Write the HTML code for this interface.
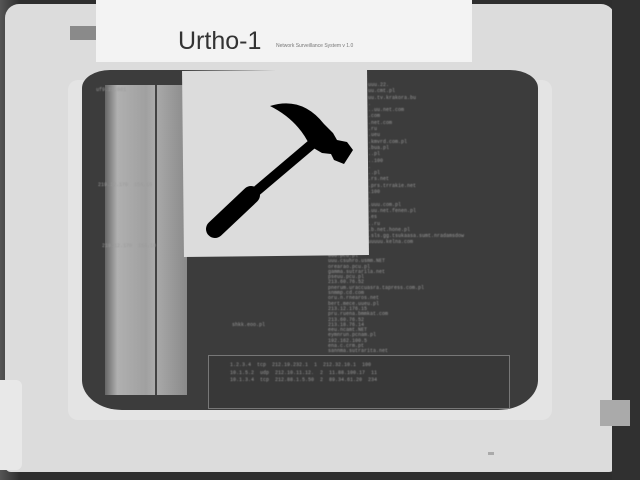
<!DOCTYPE html>
<html><head><style>
body{margin:0;width:640px;height:480px;overflow:hidden;background:#3a3a3a;position:relative;font-family:"Liberation Sans",sans-serif}
div{position:absolute}
.t{font-family:"Liberation Mono",monospace;font-size:5px;color:#9a9a9a;white-space:pre;filter:blur(0.4px)}
</style></head><body>
<div style="left:0;top:0;width:640px;height:480px;background:linear-gradient(90deg,#555 0,#2e2e2e 3%,#2e2e2e 96%,#222 100%)"></div>
<div style="left:5px;top:4px;width:610px;height:468px;background:#dcdcdc;border-radius:14px 14px 6px 6px"></div>
<div style="left:612px;top:0;width:28px;height:480px;background:#303030"></div>
<div style="left:0;top:380px;width:22px;height:90px;background:#e8e8e8;border-radius:0 6px 6px 0"></div>
<div style="left:70px;top:26px;width:28px;height:14px;background:#8a8a8a"></div>
<div style="left:68px;top:80px;width:484px;height:340px;background:#e4e4e4;border-radius:10px"></div>
<div style="left:82px;top:70px;width:456px;height:340px;background:#3c3c3c;border-radius:28px 28px 40px 40px/18px 18px 30px 30px"></div>
<div style="left:105px;top:85px;width:82px;height:310px;background:linear-gradient(90deg,#666 0,#b0b0b0 15%,#a0a0a0 50%,#ababab 60%,#8a8a8a 100%)"></div>
<div style="left:155px;top:85px;width:2px;height:310px;background:#444"></div>
<div style="left:208px;top:355px;width:300px;height:52px;border:1px solid #777;background:#383838"></div>
<div class="t" style="left:230px;top:362px;line-height:7.5px">1.2.3.4  tcp  212.19.232.1  1  212.32.10.1  100
10.1.5.2  udp  212.10.11.12.  2  11.88.100.17  11
10.1.3.4  tcp  212.88.1.5.50  2  89.34.61.20  234</div>
<div class="t" style="left:368px;top:82px;line-height:6.3px">uuu.22.
uu.cmt.pl
uu.tv.krakora.bu
.
..uu.net.com
.com
.net.com
.ru
.ueu
.kmvrd.com.pl
.bua.pl
..pl
..100
.
..pl
.rs.net
.prs.trrakie.net
.100
.
.uuu.com.pl
.uu.net.fenen.pl
.es
..ru
.b.net.hone.pl
.sls.gg.tsukaasa.sumt.nradamsdow
uuuuu.kelna.com</div>
<div class="t" style="left:328px;top:254px;line-height:5.3px">uuu.pcu.pl
uuu.csuhro.usmm.NET
orearao.pcu.pl
gamma.sutrarila.net
pseuu.pcu.pl
213.60.76.52
pnerum.uraccuasra.tapress.com.pl
snmmp.cd.com
oru.n.rnearos.net
bert.mece.uueu.pl
213.12.176.15
pru.ruena.bmmkat.com
213.60.76.52
213.18.76.14
eeu.ncamt.NET
eymnrun.pcnam.pl
192.162.100.5
ena.c.crm.pt
sannma.sutrarita.net</div>
<div class="t" style="left:232px;top:322px">shkk.eoo.pl</div>
<div class="t" style="left:98px;top:182px">219.12.170  154.10</div>
<div class="t" style="left:102px;top:243px">219.12.170  154.10</div>
<div class="t" style="left:96px;top:87px">uf9.22.001</div>
<div style="left:96px;top:0;width:376px;height:62px;background:#f3f3f3"></div>
<div style="left:178px;top:27px;font-size:25px;color:#333">Urtho-1</div>
<div style="left:276px;top:43px;font-size:5px;color:#777">Network Surveillance System v 1.0</div>
<div style="left:183px;top:70px;width:185px;height:186px;background:#dcdcdc;transform:rotate(-0.6deg)"></div>
<svg width="640" height="480" style="position:absolute;left:0;top:0">
<path d="M270,106 Q302,96 324,124 L333,133 L337,140 L347,142 L353,150 L344,164 L334,160 L331,154 L322,153 L310,146 Q298,120 270,106 Z" fill="#000"/>
<line x1="318" y1="139" x2="246" y2="200" stroke="#000" stroke-width="10"/>
<line x1="251" y1="195" x2="215" y2="229" stroke="#000" stroke-width="18" stroke-linecap="round"/>
</svg>
<div style="left:488px;top:452px;width:6px;height:3px;background:#aaa"></div>
<div style="left:600px;top:400px;width:30px;height:26px;background:#aaa"></div>
</body></html>
